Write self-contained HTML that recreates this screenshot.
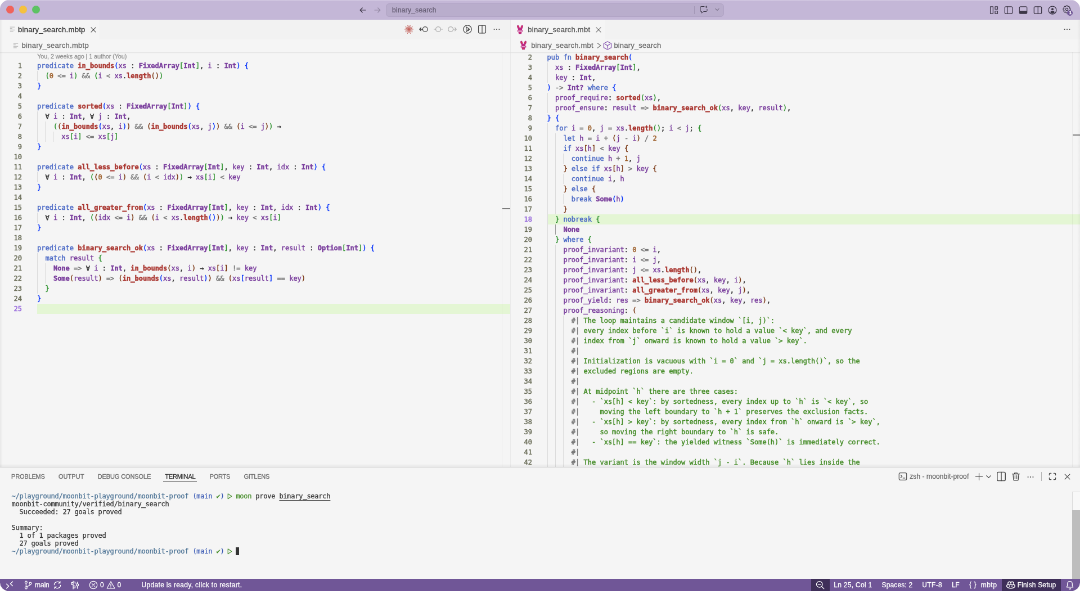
<!DOCTYPE html>
<html><head><meta charset="utf-8"><title>binary_search</title>
<style>
html,body{margin:0;padding:0;background:#fff;overflow:hidden}
body{width:1080px;height:591px;position:relative}
#w{will-change:transform;position:absolute;left:0;top:0;width:1920px;height:1050.67px;transform:scale(0.5625);transform-origin:0 0;
 font-family:"Liberation Sans",sans-serif;font-size:13px;color:#333;background:#f5f5f5;border-radius:16px;overflow:hidden}
#w *{box-sizing:border-box}
.ed{-webkit-text-stroke:0.45px currentColor}.term{-webkit-text-stroke:0.25px currentColor}.t{-webkit-text-stroke:0.3px currentColor}
.t{position:absolute;white-space:pre;font-family:"Liberation Sans",sans-serif}
.abs{position:absolute}
.ed{position:absolute;overflow:hidden;background:#f5f5f5;font-family:"DejaVu Sans Mono","Liberation Mono",monospace;font-size:12px;line-height:18px}
.ed i{font-style:normal}
.ln{position:absolute;left:0;height:18px;text-align:right;color:#6d705b}
.lna{color:#9769dc}
.cd{position:absolute;height:18px;white-space:pre;color:#333}
.cl{position:absolute;height:18px;background:#e4f6d4}
.g{position:absolute;width:1px;height:18px;background:#dcdcdc}
.ga{background:#a0a0a0}
.k{color:#4b69c6}.f{color:#aa3731;font-weight:700}.ty{color:#7a3e9d;font-weight:700}.v{color:#7a3e9d}
.p{color:#777}.n{color:#9c5d27}.s{color:#448c27}.d{color:#333}
.term{position:absolute;font-family:"DejaVu Sans Mono","Liberation Mono",monospace;font-size:12px;line-height:14px;letter-spacing:-0.225px;white-space:pre;color:#333}
.term i{font-style:normal}
.ed u,.term u{text-decoration:none;-webkit-text-stroke:0.9px currentColor}
</style></head><body><div id="w">

<div class="abs" style="left:0;top:0;width:1920px;height:35px;background:#c4b7d7"></div>
<div class="abs" style="left:0;top:0;width:1920px;height:2px;background:linear-gradient(#d9d0e6,#c4b7d7)"></div>
<div class="abs" style="left:10.87px;top:10.24px;width:14px;height:14px;border-radius:50%;background:#f0635b"></div>
<div class="abs" style="left:33.98px;top:10.24px;width:14px;height:14px;border-radius:50%;background:#f5c13f"></div>
<div class="abs" style="left:57.00px;top:10.24px;width:14px;height:14px;border-radius:50%;background:#5dc263"></div>
<svg class="abs" style="left:636.80px;top:9.60px;color:#3c3647;opacity:1" width="16" height="16" viewBox="0 0 16 16"><path d="M13 8H3.2M7.2 4L3.2 8l4 4" fill="none" stroke="currentColor" stroke-width="1.2" stroke-linecap="round" stroke-linejoin="round" /></svg>
<svg class="abs" style="left:663.29px;top:9.60px;color:#3c3647;opacity:0.35" width="16" height="16" viewBox="0 0 16 16"><path d="M3 8h9.8M8.8 4l4 4-4 4" fill="none" stroke="currentColor" stroke-width="1.2" stroke-linecap="round" stroke-linejoin="round" /></svg>
<div class="abs" style="left:686.4px;top:6px;width:600.2px;height:24px;border-radius:6px;background:#b9adcc;border:1px solid #b1a4c5"></div>
<span class="t" style="left:697.07px;top:7.60px;font-size:12px;line-height:20px;color:#6a6178;letter-spacing:0.246px;">binary_search</span>
<div class="abs" style="left:1234px;top:11px;width:1px;height:14px;background:#a397b6"></div>
<svg class="abs" style="left:1242.67px;top:9.42px;color:#3c3647;opacity:1" width="16" height="16" viewBox="0 0 16 16"><path d="M9 2.5H3.5a1.5 1.5 0 0 0-1.500 1.500v6a1.5 1.5 0 0 0 1.500 1.500H4.500v2.800l3.400-2.800H12.500a1.5 1.5 0 0 0 1.500-1.500V7.500" fill="none" stroke="currentColor" stroke-width="1" stroke-linecap="round" stroke-linejoin="round" /><path d="M12.500 0.800l0.700 1.800 1.800 0.700-1.800 0.700-0.700 1.800-0.700-1.800-1.800-0.700 1.800-0.700z" fill="currentColor"/></svg>
<svg class="abs" style="left:1268.67px;top:11.42px;color:#4a4356;opacity:1" width="12" height="12" viewBox="0 0 16 16"><path d="M4 6l4 4 4-4" fill="none" stroke="currentColor" stroke-width="1.25" stroke-linecap="round" stroke-linejoin="round" /></svg>
<svg class="abs" style="left:1759.11px;top:9.78px;color:#3c3647;opacity:1" width="16" height="16" viewBox="0 0 16 16"><path d="M1.600 1.800h4.800v12.400h-4.800zM10 1.800h4.400v4.600H10zM10 9.600h4.400v4.600H10z" fill="none" stroke="currentColor" stroke-width="1.25" stroke-linecap="round" stroke-linejoin="round" /></svg>
<svg class="abs" style="left:1784.89px;top:9.78px;color:#3c3647;opacity:1" width="16" height="16" viewBox="0 0 16 16"><rect x="1.300" y="1.800" width="13.400" height="12.400" rx="2" fill="none" stroke="currentColor" stroke-width="1.25"/><path d="M5.800 1.800v12.400" fill="none" stroke="currentColor" stroke-width="1.25" stroke-linecap="round" stroke-linejoin="round" /></svg>
<svg class="abs" style="left:1810.67px;top:9.78px;color:#3c3647;opacity:1" width="16" height="16" viewBox="0 0 16 16"><rect x="1.300" y="1.800" width="13.400" height="12.400" rx="2" fill="none" stroke="currentColor" stroke-width="1.25"/><path d="M1.300 9.200h13.400v3a2 2 0 0 1-2 2H3.300a2 2 0 0 1-2-2z" fill="currentColor"/></svg>
<svg class="abs" style="left:1837.33px;top:9.78px;color:#3c3647;opacity:1" width="16" height="16" viewBox="0 0 16 16"><rect x="1.300" y="1.800" width="13.400" height="12.400" rx="2" fill="none" stroke="currentColor" stroke-width="1.25"/><path d="M8.300 1.800v12.400" fill="none" stroke="currentColor" stroke-width="1.25" stroke-linecap="round" stroke-linejoin="round" /></svg>
<svg class="abs" style="left:1862.93px;top:9.78px;color:#3c3647;opacity:1" width="16" height="16" viewBox="0 0 16 16"><circle cx="8" cy="8" r="7" fill="none" stroke="currentColor" stroke-width="1.25"/><circle cx="8" cy="6.300" r="2" fill="currentColor"/><path d="M4 11.800c0.800-2 2.300-2.600 4-2.600s3.200 0.600 4 2.600c-1 1.300-2.400 2.200-4 2.200s-3-0.900-4-2.200z" fill="currentColor"/></svg>
<svg class="abs" style="left:1888.86px;top:9.21px;color:#3c3647;opacity:1" width="15" height="15" viewBox="0 0 16 16"><path d="M6.61 1.14L9.39 1.14L10.01 3.10L10.04 3.11L11.87 2.17L13.83 4.13L12.89 5.96L12.90 5.99L14.86 6.61L14.86 9.39L12.90 10.01L12.89 10.04L13.83 11.87L11.87 13.83L10.04 12.89L10.01 12.90L9.39 14.86L6.61 14.86L5.99 12.90L5.96 12.89L4.13 13.83L2.17 11.87L3.11 10.04L3.10 10.01L1.14 9.39L1.14 6.61L3.10 5.99L3.11 5.96L2.17 4.13L4.13 2.17L5.96 3.11L5.99 3.10z" fill="none" stroke="currentColor" stroke-width="1.2" stroke-linejoin="round"/><circle cx="8" cy="8" r="2.300" fill="none" stroke="currentColor" stroke-width="1.2"/></svg>
<div class="abs" style="left:1896.97px;top:17.51px;width:10.5px;height:10.5px;border-radius:50%;background:#705697"></div>
<span class="t" style="left:1900.80px;top:12.93px;font-size:7.5px;line-height:20px;color:#fff;letter-spacing:0.000px;font-weight:700;">1</span>
<div class="abs" style="left:0;top:35px;width:1920px;height:35px;background:#f2f2f2"></div>
<div class="abs" style="left:0;top:35px;width:177px;height:35px;background:#f5f5f5"></div>
<div class="abs" style="left:908px;top:35px;width:168px;height:35px;background:#f5f5f5"></div>
<div class="abs" style="left:0;top:70px;width:1920px;height:22px;background:#f5f5f5"></div>
<svg class="abs" style="left:13.87px;top:44.27px;color:#bdbdbd;opacity:1" width="16" height="16" viewBox="0 0 16 16"><path d="M3.850 4.100h8.300M3.850 6.700h3.900M3.850 9.300h8.300M3.850 11.900h5.800" fill="none" stroke="currentColor" stroke-width="1.3"/></svg>
<span class="t" style="left:32.00px;top:42.98px;font-size:13px;line-height:20px;color:#333;letter-spacing:0.304px;">binary_search.mbtp</span>
<svg class="abs" style="left:159.22px;top:45.98px;color:#424242;opacity:1" width="14" height="14" viewBox="0 0 16 16"><path d="M3.400 3.400l9.200 9.200M12.600 3.400l-9.200 9.200" fill="none" stroke="currentColor" stroke-width="1.25" stroke-linecap="round" stroke-linejoin="round" /></svg>
<svg class="abs" style="left:718.93px;top:44.27px;color:#c4635c;opacity:1" width="16" height="16" viewBox="0 0 16 16"><path d="M9.00 8.00L16.00 8.00 M8.95 8.31L13.90 9.92 M8.81 8.59L14.47 12.70 M8.59 8.81L11.64 13.02 M8.31 8.95L10.47 15.61 M8.00 9.00L8.00 14.20 M7.69 8.95L5.53 15.61 M7.41 8.81L4.36 13.02 M7.19 8.59L1.53 12.70 M7.05 8.31L2.10 9.92 M7.00 8.00L0.00 8.00 M7.05 7.69L2.10 6.08 M7.19 7.41L1.53 3.30 M7.41 7.19L4.36 2.98 M7.69 7.05L5.53 0.39 M8.00 7.00L8.00 1.80 M8.31 7.05L10.47 0.39 M8.59 7.19L11.64 2.98 M8.81 7.41L14.47 3.30 M8.95 7.69L13.90 6.08" fill="none" stroke="currentColor" stroke-width="0.9" stroke-linecap="round" stroke-linejoin="round" /><circle cx="8" cy="8" r="1.600" fill="currentColor"/></svg>
<svg class="abs" style="left:744.71px;top:44.27px;color:#424242;opacity:1" width="16" height="16" viewBox="0 0 16 16"><circle cx="10.800" cy="8" r="4.400" fill="none" stroke="currentColor" stroke-width="1.3"/><path d="M6.200 8H0.800M3.400 5.200L0.800 8l2.600 2.800" fill="none" stroke="currentColor" stroke-width="1.3" stroke-linecap="round" stroke-linejoin="round" /></svg>
<svg class="abs" style="left:771.20px;top:44.27px;color:#424242;opacity:0.4" width="16" height="16" viewBox="0 0 16 16"><circle cx="8" cy="8" r="4.400" fill="none" stroke="currentColor" stroke-width="1.2"/><path d="M0.500 8h3M12.500 8h3" fill="none" stroke="currentColor" stroke-width="1.2" stroke-linecap="round" stroke-linejoin="round" /></svg>
<svg class="abs" style="left:796.44px;top:44.27px;color:#424242;opacity:0.4" width="16" height="16" viewBox="0 0 16 16"><circle cx="5.200" cy="8" r="4.400" fill="none" stroke="currentColor" stroke-width="1.2"/><path d="M9.800 8h5.400M12.600 5.200L15.200 8l-2.600 2.800" fill="none" stroke="currentColor" stroke-width="1.2" stroke-linecap="round" stroke-linejoin="round" /></svg>
<svg class="abs" style="left:822.76px;top:44.27px;color:#424242;opacity:1" width="16" height="16" viewBox="0 0 16 16"><circle cx="8" cy="8" r="7.200" fill="none" stroke="currentColor" stroke-width="1.25"/><path d="M5.800 3.800v8.400M5.800 3.800l6 4.200-6 4.200" fill="none" stroke="currentColor" stroke-width="1.25" stroke-linecap="round" stroke-linejoin="round" /><circle cx="9.300" cy="9.600" r="1.500" fill="currentColor"/></svg>
<svg class="abs" style="left:848.89px;top:44.44px;color:#424242;opacity:1" width="16" height="16" viewBox="0 0 16 16"><rect x="1.600" y="1.200" width="12.800" height="13.600" rx="2" fill="none" stroke="currentColor" stroke-width="1.25"/><path d="M8 1.200v13.600" fill="none" stroke="currentColor" stroke-width="1.25" stroke-linecap="round" stroke-linejoin="round" /></svg>
<svg class="abs" style="left:875.02px;top:44.27px;color:#424242;opacity:1" width="16" height="16" viewBox="0 0 16 16"><circle cx="3.600" cy="8" r="1.050" fill="currentColor"/><circle cx="8" cy="8" r="1.050" fill="currentColor"/><circle cx="12.400" cy="8" r="1.050" fill="currentColor"/></svg>
<svg class="abs" style="left:19.56px;top:72.71px;color:#bdbdbd;opacity:1" width="16" height="16" viewBox="0 0 16 16"><path d="M3.850 4.100h8.300M3.850 6.700h3.900M3.850 9.300h8.300M3.850 11.900h5.800" fill="none" stroke="currentColor" stroke-width="1.3"/></svg>
<span class="t" style="left:38.58px;top:71.42px;font-size:13px;line-height:20px;color:#6c6c6c;letter-spacing:0.294px;">binary_search.mbtp</span>
<svg class="abs" style="left:917.59px;top:43.77px" width="13" height="17" viewBox="1.500 0 13 16"><g fill="#bf2a85"><ellipse cx="4.900" cy="3.700" rx="2.000" ry="3.700" transform="rotate(-20 4.900 3.700)"/><ellipse cx="11.100" cy="3.700" rx="2.000" ry="3.700" transform="rotate(20 11.100 3.700)"/><ellipse cx="8" cy="8" rx="3.600" ry="2.700"/><path d="M3.200 9.300h9.600v2.600H3.200z"/><path d="M4.800 11.500h6.400l-0.900 4.300H5.700z"/></g><rect x="4.200" y="9.900" width="7.600" height="1.700" rx="0.800" fill="#fdf3f8"/><circle cx="4.900" cy="3.000" r="0.950" fill="#dc4a35"/><circle cx="11.100" cy="3.000" r="0.950" fill="#dc4a35"/><circle cx="8" cy="13.600" r="0.950" fill="#dc4a35"/></svg>
<span class="t" style="left:938.31px;top:42.98px;font-size:13px;line-height:20px;color:#555;letter-spacing:0.235px;">binary_search.mbt</span>
<svg class="abs" style="left:1057.18px;top:45.98px;color:#6a6a6a;opacity:1" width="14" height="14" viewBox="0 0 16 16"><path d="M3.400 3.400l9.200 9.200M12.600 3.400l-9.200 9.200" fill="none" stroke="currentColor" stroke-width="1.25" stroke-linecap="round" stroke-linejoin="round" /></svg>
<svg class="abs" style="left:1888.89px;top:44.27px;color:#424242;opacity:1" width="16" height="16" viewBox="0 0 16 16"><circle cx="3.600" cy="8" r="1.050" fill="currentColor"/><circle cx="8" cy="8" r="1.050" fill="currentColor"/><circle cx="12.400" cy="8" r="1.050" fill="currentColor"/></svg>
<svg class="abs" style="left:923.63px;top:72.39px" width="13" height="17" viewBox="1.500 0 13 16"><g fill="#bf2a85"><ellipse cx="4.900" cy="3.700" rx="2.000" ry="3.700" transform="rotate(-20 4.900 3.700)"/><ellipse cx="11.100" cy="3.700" rx="2.000" ry="3.700" transform="rotate(20 11.100 3.700)"/><ellipse cx="8" cy="8" rx="3.600" ry="2.700"/><path d="M3.200 9.300h9.600v2.600H3.200z"/><path d="M4.800 11.500h6.400l-0.900 4.300H5.700z"/></g><rect x="4.200" y="9.900" width="7.600" height="1.700" rx="0.800" fill="#fdf3f8"/><circle cx="4.900" cy="3.000" r="0.950" fill="#dc4a35"/><circle cx="11.100" cy="3.000" r="0.950" fill="#dc4a35"/><circle cx="8" cy="13.600" r="0.950" fill="#dc4a35"/></svg>
<span class="t" style="left:944.18px;top:71.42px;font-size:13px;line-height:20px;color:#6c6c6c;letter-spacing:0.214px;">binary_search.mbt</span>
<svg class="abs" style="left:1057.07px;top:72.89px;color:#777;opacity:1" width="16" height="16" viewBox="0 0 16 16"><path d="M5.200 3.800L10.800 8l-5.600 4.200" fill="none" stroke="currentColor" stroke-width="1.3" stroke-linecap="round" stroke-linejoin="round" /></svg>
<svg class="abs" style="left:1072.00px;top:72.71px;color:#8a5bb5;opacity:1" width="16" height="16" viewBox="0 0 16 16"><path d="M8 0.800l6.600 3.600v7.200L8 15.200 1.400 11.600V4.400zM3.600 5.400L8 8l4.400-2.600M8 8v5" fill="none" stroke="currentColor" stroke-width="1.3" stroke-linecap="round" stroke-linejoin="round" /></svg>
<span class="t" style="left:1091.38px;top:71.42px;font-size:13px;line-height:20px;color:#6c6c6c;letter-spacing:0.173px;">binary_search</span>
<div class="ed" style="left:0px;top:92px;width:907px;height:738px">
<div class="ln" style="top:16px;width:39px">1</div>
<div class="cd" style="top:16px;left:66px"><i class="k">predicate</i> <i class="f">in<u>_</u>bounds</i><i style="color:#0431FA">(</i><i class="v">xs</i> : <i class="ty">FixedArray</i><i style="color:#319331">[</i><i class="ty">Int</i><i style="color:#319331">]</i>, <i class="v">i</i> : <i class="ty">Int</i><i style="color:#0431FA">)</i> <i style="color:#0431FA">{</i></div>
<div class="g" style="top:34px;left:66.00px"></div>
<div class="ln" style="top:34px;width:39px">2</div>
<div class="cd" style="top:34px;left:66px">  <i style="color:#319331">(</i><i class="n">0</i> <i class="p">&lt;=</i> <i class="v">i</i><i style="color:#319331">)</i> <i class="p">&amp;&amp;</i> <i style="color:#319331">(</i><i class="v">i</i> <i class="p">&lt;</i> <i class="v">xs</i>.<i class="f">length</i><i style="color:#7B3814">(</i><i style="color:#7B3814">)</i><i style="color:#319331">)</i></div>
<div class="ln" style="top:52px;width:39px">3</div>
<div class="cd" style="top:52px;left:66px"><i style="color:#0431FA">}</i></div>
<div class="ln" style="top:70px;width:39px">4</div>
<div class="ln" style="top:88px;width:39px">5</div>
<div class="cd" style="top:88px;left:66px"><i class="k">predicate</i> <i class="f">sorted</i><i style="color:#0431FA">(</i><i class="v">xs</i> : <i class="ty">FixedArray</i><i style="color:#319331">[</i><i class="ty">Int</i><i style="color:#319331">]</i><i style="color:#0431FA">)</i> <i style="color:#0431FA">{</i></div>
<div class="g" style="top:106px;left:66.00px"></div>
<div class="ln" style="top:106px;width:39px">6</div>
<div class="cd" style="top:106px;left:66px">  <i class="d">∀</i> <i class="v">i</i> : <i class="ty">Int</i>, <i class="d">∀</i> <i class="v">j</i> : <i class="ty">Int</i>,</div>
<div class="g" style="top:124px;left:66.00px"></div>
<div class="g" style="top:124px;left:80.45px"></div>
<div class="ln" style="top:124px;width:39px">7</div>
<div class="cd" style="top:124px;left:66px">    <i style="color:#319331">(</i><i style="color:#7B3814">(</i><i class="f">in<u>_</u>bounds</i><i style="color:#0431FA">(</i><i class="v">xs</i>, <i class="v">i</i><i style="color:#0431FA">)</i><i style="color:#7B3814">)</i> <i class="p">&amp;&amp;</i> <i style="color:#7B3814">(</i><i class="f">in<u>_</u>bounds</i><i style="color:#0431FA">(</i><i class="v">xs</i>, <i class="v">j</i><i style="color:#0431FA">)</i><i style="color:#7B3814">)</i> <i class="p">&amp;&amp;</i> <i style="color:#7B3814">(</i><i class="v">i</i> <i class="p">&lt;=</i> <i class="v">j</i><i style="color:#7B3814">)</i><i style="color:#319331">)</i> <i class="d">→</i></div>
<div class="g" style="top:142px;left:66.00px"></div>
<div class="g" style="top:142px;left:80.45px"></div>
<div class="g" style="top:142px;left:94.90px"></div>
<div class="ln" style="top:142px;width:39px">8</div>
<div class="cd" style="top:142px;left:66px">      <i class="v">xs</i><i style="color:#319331">[</i><i class="v">i</i><i style="color:#319331">]</i> <i class="p">&lt;=</i> <i class="v">xs</i><i style="color:#319331">[</i><i class="v">j</i><i style="color:#319331">]</i></div>
<div class="ln" style="top:160px;width:39px">9</div>
<div class="cd" style="top:160px;left:66px"><i style="color:#0431FA">}</i></div>
<div class="ln" style="top:178px;width:39px">10</div>
<div class="ln" style="top:196px;width:39px">11</div>
<div class="cd" style="top:196px;left:66px"><i class="k">predicate</i> <i class="f">all<u>_</u>less<u>_</u>before</i><i style="color:#0431FA">(</i><i class="v">xs</i> : <i class="ty">FixedArray</i><i style="color:#319331">[</i><i class="ty">Int</i><i style="color:#319331">]</i>, <i class="v">key</i> : <i class="ty">Int</i>, <i class="v">idx</i> : <i class="ty">Int</i><i style="color:#0431FA">)</i> <i style="color:#0431FA">{</i></div>
<div class="g" style="top:214px;left:66.00px"></div>
<div class="ln" style="top:214px;width:39px">12</div>
<div class="cd" style="top:214px;left:66px">  <i class="d">∀</i> <i class="v">i</i> : <i class="ty">Int</i>, <i style="color:#319331">(</i><i style="color:#7B3814">(</i><i class="n">0</i> <i class="p">&lt;=</i> <i class="v">i</i><i style="color:#7B3814">)</i> <i class="p">&amp;&amp;</i> <i style="color:#7B3814">(</i><i class="v">i</i> <i class="p">&lt;</i> <i class="v">idx</i><i style="color:#7B3814">)</i><i style="color:#319331">)</i> <i class="d">→</i> <i class="v">xs</i><i style="color:#319331">[</i><i class="v">i</i><i style="color:#319331">]</i> <i class="p">&lt;</i> <i class="v">key</i></div>
<div class="ln" style="top:232px;width:39px">13</div>
<div class="cd" style="top:232px;left:66px"><i style="color:#0431FA">}</i></div>
<div class="ln" style="top:250px;width:39px">14</div>
<div class="ln" style="top:268px;width:39px">15</div>
<div class="cd" style="top:268px;left:66px"><i class="k">predicate</i> <i class="f">all<u>_</u>greater<u>_</u>from</i><i style="color:#0431FA">(</i><i class="v">xs</i> : <i class="ty">FixedArray</i><i style="color:#319331">[</i><i class="ty">Int</i><i style="color:#319331">]</i>, <i class="v">key</i> : <i class="ty">Int</i>, <i class="v">idx</i> : <i class="ty">Int</i><i style="color:#0431FA">)</i> <i style="color:#0431FA">{</i></div>
<div class="g" style="top:286px;left:66.00px"></div>
<div class="ln" style="top:286px;width:39px">16</div>
<div class="cd" style="top:286px;left:66px">  <i class="d">∀</i> <i class="v">i</i> : <i class="ty">Int</i>, <i style="color:#319331">(</i><i style="color:#7B3814">(</i><i class="v">idx</i> <i class="p">&lt;=</i> <i class="v">i</i><i style="color:#7B3814">)</i> <i class="p">&amp;&amp;</i> <i style="color:#7B3814">(</i><i class="v">i</i> <i class="p">&lt;</i> <i class="v">xs</i>.<i class="f">length</i><i style="color:#0431FA">(</i><i style="color:#0431FA">)</i><i style="color:#7B3814">)</i><i style="color:#319331">)</i> <i class="d">→</i> <i class="v">key</i> <i class="p">&lt;</i> <i class="v">xs</i><i style="color:#319331">[</i><i class="v">i</i><i style="color:#319331">]</i></div>
<div class="ln" style="top:304px;width:39px">17</div>
<div class="cd" style="top:304px;left:66px"><i style="color:#0431FA">}</i></div>
<div class="ln" style="top:322px;width:39px">18</div>
<div class="ln" style="top:340px;width:39px">19</div>
<div class="cd" style="top:340px;left:66px"><i class="k">predicate</i> <i class="f">binary<u>_</u>search<u>_</u>ok</i><i style="color:#0431FA">(</i><i class="v">xs</i> : <i class="ty">FixedArray</i><i style="color:#319331">[</i><i class="ty">Int</i><i style="color:#319331">]</i>, <i class="v">key</i> : <i class="ty">Int</i>, <i class="v">result</i> : <i class="ty">Option</i><i style="color:#319331">[</i><i class="ty">Int</i><i style="color:#319331">]</i><i style="color:#0431FA">)</i> <i style="color:#0431FA">{</i></div>
<div class="g" style="top:358px;left:66.00px"></div>
<div class="ln" style="top:358px;width:39px">20</div>
<div class="cd" style="top:358px;left:66px">  <i class="k">match</i> <i class="v">result</i> <i style="color:#319331">{</i></div>
<div class="g" style="top:376px;left:66.00px"></div>
<div class="g" style="top:376px;left:80.45px"></div>
<div class="ln" style="top:376px;width:39px">21</div>
<div class="cd" style="top:376px;left:66px">    <i class="ty">None</i> <i class="p">=&gt;</i> <i class="d">∀</i> <i class="v">i</i> : <i class="ty">Int</i>, <i class="f">in<u>_</u>bounds</i><i style="color:#7B3814">(</i><i class="v">xs</i>, <i class="v">i</i><i style="color:#7B3814">)</i> <i class="d">→</i> <i class="v">xs</i><i style="color:#7B3814">[</i><i class="v">i</i><i style="color:#7B3814">]</i> <i class="p">!=</i> <i class="v">key</i></div>
<div class="g" style="top:394px;left:66.00px"></div>
<div class="g" style="top:394px;left:80.45px"></div>
<div class="ln" style="top:394px;width:39px">22</div>
<div class="cd" style="top:394px;left:66px">    <i class="ty">Some</i><i style="color:#7B3814">(</i><i class="v">result</i><i style="color:#7B3814">)</i> <i class="p">=&gt;</i> <i style="color:#7B3814">(</i><i class="f">in<u>_</u>bounds</i><i style="color:#0431FA">(</i><i class="v">xs</i>, <i class="v">result</i><i style="color:#0431FA">)</i><i style="color:#7B3814">)</i> <i class="p">&amp;&amp;</i> <i style="color:#7B3814">(</i><i class="v">xs</i><i style="color:#0431FA">[</i><i class="v">result</i><i style="color:#0431FA">]</i> <i class="p">==</i> <i class="v">key</i><i style="color:#7B3814">)</i></div>
<div class="g" style="top:412px;left:66.00px"></div>
<div class="ln" style="top:412px;width:39px">23</div>
<div class="cd" style="top:412px;left:66px">  <i style="color:#319331">}</i></div>
<div class="ln" style="top:430px;width:39px">24</div>
<div class="cd" style="top:430px;left:66px"><i style="color:#0431FA">}</i></div>
<div class="cl" style="top:448px;left:66px;width:841px"></div>
<div class="ln lna" style="top:448px;width:39px">25</div>
</div>
<div class="ed" style="left:908px;top:92px;width:1012px;height:738px">
<div class="ln" style="top:1px;width:38px">2</div>
<div class="cd" style="top:1px;left:64.5px"><i class="k">pub</i> <i class="k">fn</i> <i class="f">binary<u>_</u>search</i><i style="color:#0431FA">(</i></div>
<div class="g" style="top:19px;left:64.50px"></div>
<div class="ln" style="top:19px;width:38px">3</div>
<div class="cd" style="top:19px;left:64.5px">  <i class="v">xs</i> : <i class="ty">FixedArray</i><i style="color:#319331">[</i><i class="ty">Int</i><i style="color:#319331">]</i>,</div>
<div class="g" style="top:37px;left:64.50px"></div>
<div class="ln" style="top:37px;width:38px">4</div>
<div class="cd" style="top:37px;left:64.5px">  <i class="v">key</i> : <i class="ty">Int</i>,</div>
<div class="ln" style="top:55px;width:38px">5</div>
<div class="cd" style="top:55px;left:64.5px"><i style="color:#0431FA">)</i> <i class="p">-&gt;</i> <i class="ty">Int?</i> <i class="k">where</i> <i style="color:#0431FA">{</i></div>
<div class="g" style="top:73px;left:64.50px"></div>
<div class="ln" style="top:73px;width:38px">6</div>
<div class="cd" style="top:73px;left:64.5px">  <i class="v">proof<u>_</u>require</i>: <i class="f">sorted</i><i style="color:#319331">(</i><i class="v">xs</i><i style="color:#319331">)</i>,</div>
<div class="g" style="top:91px;left:64.50px"></div>
<div class="ln" style="top:91px;width:38px">7</div>
<div class="cd" style="top:91px;left:64.5px">  <i class="v">proof<u>_</u>ensure</i>: <i class="v">result</i> <i class="p">=&gt;</i> <i class="f">binary<u>_</u>search<u>_</u>ok</i><i style="color:#319331">(</i><i class="v">xs</i>, <i class="v">key</i>, <i class="v">result</i><i style="color:#319331">)</i>,</div>
<div class="ln" style="top:109px;width:38px">8</div>
<div class="cd" style="top:109px;left:64.5px"><i style="color:#0431FA">}</i> <i style="color:#0431FA">{</i></div>
<div class="g" style="top:127px;left:64.50px"></div>
<div class="ln" style="top:127px;width:38px">9</div>
<div class="cd" style="top:127px;left:64.5px">  <i class="k">for</i> <i class="v">i</i> <i class="p">=</i> <i class="n">0</i>, <i class="v">j</i> <i class="p">=</i> <i class="v">xs</i>.<i class="f">length</i><i style="color:#319331">(</i><i style="color:#319331">)</i>; <i class="v">i</i> <i class="p">&lt;</i> <i class="v">j</i>; <i style="color:#319331">{</i></div>
<div class="g" style="top:145px;left:64.50px"></div>
<div class="g" style="top:145px;left:78.95px"></div>
<div class="ln" style="top:145px;width:38px">10</div>
<div class="cd" style="top:145px;left:64.5px">    <i class="k">let</i> <i class="v">h</i> <i class="p">=</i> <i class="v">i</i> <i class="p">+</i> <i style="color:#7B3814">(</i><i class="v">j</i> <i class="p">-</i> <i class="v">i</i><i style="color:#7B3814">)</i> <i class="p">/</i> <i class="n">2</i></div>
<div class="g" style="top:163px;left:64.50px"></div>
<div class="g" style="top:163px;left:78.95px"></div>
<div class="ln" style="top:163px;width:38px">11</div>
<div class="cd" style="top:163px;left:64.5px">    <i class="k">if</i> <i class="v">xs</i><i style="color:#7B3814">[</i><i class="v">h</i><i style="color:#7B3814">]</i> <i class="p">&lt;</i> <i class="v">key</i> <i style="color:#7B3814">{</i></div>
<div class="g" style="top:181px;left:64.50px"></div>
<div class="g" style="top:181px;left:78.95px"></div>
<div class="g" style="top:181px;left:93.40px"></div>
<div class="ln" style="top:181px;width:38px">12</div>
<div class="cd" style="top:181px;left:64.5px">      <i class="k">continue</i> <i class="v">h</i> <i class="p">+</i> <i class="n">1</i>, <i class="v">j</i></div>
<div class="g" style="top:199px;left:64.50px"></div>
<div class="g" style="top:199px;left:78.95px"></div>
<div class="ln" style="top:199px;width:38px">13</div>
<div class="cd" style="top:199px;left:64.5px">    <i style="color:#7B3814">}</i> <i class="k">else</i> <i class="k">if</i> <i class="v">xs</i><i style="color:#7B3814">[</i><i class="v">h</i><i style="color:#7B3814">]</i> <i class="p">&gt;</i> <i class="v">key</i> <i style="color:#7B3814">{</i></div>
<div class="g" style="top:217px;left:64.50px"></div>
<div class="g" style="top:217px;left:78.95px"></div>
<div class="g" style="top:217px;left:93.40px"></div>
<div class="ln" style="top:217px;width:38px">14</div>
<div class="cd" style="top:217px;left:64.5px">      <i class="k">continue</i> <i class="v">i</i>, <i class="v">h</i></div>
<div class="g" style="top:235px;left:64.50px"></div>
<div class="g" style="top:235px;left:78.95px"></div>
<div class="ln" style="top:235px;width:38px">15</div>
<div class="cd" style="top:235px;left:64.5px">    <i style="color:#7B3814">}</i> <i class="k">else</i> <i style="color:#7B3814">{</i></div>
<div class="g" style="top:253px;left:64.50px"></div>
<div class="g" style="top:253px;left:78.95px"></div>
<div class="g" style="top:253px;left:93.40px"></div>
<div class="ln" style="top:253px;width:38px">16</div>
<div class="cd" style="top:253px;left:64.5px">      <i class="k">break</i> <i class="ty">Some</i><i style="color:#0431FA">(</i><i class="v">h</i><i style="color:#0431FA">)</i></div>
<div class="g" style="top:271px;left:64.50px"></div>
<div class="g" style="top:271px;left:78.95px"></div>
<div class="ln" style="top:271px;width:38px">17</div>
<div class="cd" style="top:271px;left:64.5px">    <i style="color:#7B3814">}</i></div>
<div class="cl" style="top:289px;left:64.5px;width:947.5px"></div>
<div class="g" style="top:289px;left:64.50px"></div>
<div class="ln lna" style="top:289px;width:38px">18</div>
<div class="cd" style="top:289px;left:64.5px">  <i style="color:#319331">}</i> <i class="k">nobreak</i> <i style="color:#319331">{</i></div>
<div class="g" style="top:307px;left:64.50px"></div>
<div class="g ga" style="top:307px;left:78.95px"></div>
<div class="ln" style="top:307px;width:38px">19</div>
<div class="cd" style="top:307px;left:64.5px">    <i class="ty">None</i></div>
<div class="g" style="top:325px;left:64.50px"></div>
<div class="ln" style="top:325px;width:38px">20</div>
<div class="cd" style="top:325px;left:64.5px">  <i style="color:#319331">}</i> <i class="k">where</i> <i style="color:#319331">{</i></div>
<div class="g" style="top:343px;left:64.50px"></div>
<div class="g" style="top:343px;left:78.95px"></div>
<div class="ln" style="top:343px;width:38px">21</div>
<div class="cd" style="top:343px;left:64.5px">    <i class="v">proof<u>_</u>invariant</i>: <i class="n">0</i> <i class="p">&lt;=</i> <i class="v">i</i>,</div>
<div class="g" style="top:361px;left:64.50px"></div>
<div class="g" style="top:361px;left:78.95px"></div>
<div class="ln" style="top:361px;width:38px">22</div>
<div class="cd" style="top:361px;left:64.5px">    <i class="v">proof<u>_</u>invariant</i>: <i class="v">i</i> <i class="p">&lt;=</i> <i class="v">j</i>,</div>
<div class="g" style="top:379px;left:64.50px"></div>
<div class="g" style="top:379px;left:78.95px"></div>
<div class="ln" style="top:379px;width:38px">23</div>
<div class="cd" style="top:379px;left:64.5px">    <i class="v">proof<u>_</u>invariant</i>: <i class="v">j</i> <i class="p">&lt;=</i> <i class="v">xs</i>.<i class="f">length</i><i style="color:#7B3814">(</i><i style="color:#7B3814">)</i>,</div>
<div class="g" style="top:397px;left:64.50px"></div>
<div class="g" style="top:397px;left:78.95px"></div>
<div class="ln" style="top:397px;width:38px">24</div>
<div class="cd" style="top:397px;left:64.5px">    <i class="v">proof<u>_</u>invariant</i>: <i class="f">all<u>_</u>less<u>_</u>before</i><i style="color:#7B3814">(</i><i class="v">xs</i>, <i class="v">key</i>, <i class="v">i</i><i style="color:#7B3814">)</i>,</div>
<div class="g" style="top:415px;left:64.50px"></div>
<div class="g" style="top:415px;left:78.95px"></div>
<div class="ln" style="top:415px;width:38px">25</div>
<div class="cd" style="top:415px;left:64.5px">    <i class="v">proof<u>_</u>invariant</i>: <i class="f">all<u>_</u>greater<u>_</u>from</i><i style="color:#7B3814">(</i><i class="v">xs</i>, <i class="v">key</i>, <i class="v">j</i><i style="color:#7B3814">)</i>,</div>
<div class="g" style="top:433px;left:64.50px"></div>
<div class="g" style="top:433px;left:78.95px"></div>
<div class="ln" style="top:433px;width:38px">26</div>
<div class="cd" style="top:433px;left:64.5px">    <i class="v">proof<u>_</u>yield</i>: <i class="v">res</i> <i class="p">=&gt;</i> <i class="f">binary<u>_</u>search<u>_</u>ok</i><i style="color:#7B3814">(</i><i class="v">xs</i>, <i class="v">key</i>, <i class="v">res</i><i style="color:#7B3814">)</i>,</div>
<div class="g" style="top:451px;left:64.50px"></div>
<div class="g" style="top:451px;left:78.95px"></div>
<div class="ln" style="top:451px;width:38px">27</div>
<div class="cd" style="top:451px;left:64.5px">    <i class="v">proof<u>_</u>reasoning</i>: <i style="color:#7B3814">(</i></div>
<div class="g" style="top:469px;left:64.50px"></div>
<div class="g" style="top:469px;left:78.95px"></div>
<div class="g" style="top:469px;left:93.40px"></div>
<div class="ln" style="top:469px;width:38px">28</div>
<div class="cd" style="top:469px;left:64.5px">      <i class="p">#|</i><i class="s"> The loop maintains a candidate window `[i, j)`:</i></div>
<div class="g" style="top:487px;left:64.50px"></div>
<div class="g" style="top:487px;left:78.95px"></div>
<div class="g" style="top:487px;left:93.40px"></div>
<div class="ln" style="top:487px;width:38px">29</div>
<div class="cd" style="top:487px;left:64.5px">      <i class="p">#|</i><i class="s"> every index before `i` is known to hold a value `&lt; key`, and every</i></div>
<div class="g" style="top:505px;left:64.50px"></div>
<div class="g" style="top:505px;left:78.95px"></div>
<div class="g" style="top:505px;left:93.40px"></div>
<div class="ln" style="top:505px;width:38px">30</div>
<div class="cd" style="top:505px;left:64.5px">      <i class="p">#|</i><i class="s"> index from `j` onward is known to hold a value `&gt; key`.</i></div>
<div class="g" style="top:523px;left:64.50px"></div>
<div class="g" style="top:523px;left:78.95px"></div>
<div class="g" style="top:523px;left:93.40px"></div>
<div class="ln" style="top:523px;width:38px">31</div>
<div class="cd" style="top:523px;left:64.5px">      <i class="p">#|</i></div>
<div class="g" style="top:541px;left:64.50px"></div>
<div class="g" style="top:541px;left:78.95px"></div>
<div class="g" style="top:541px;left:93.40px"></div>
<div class="ln" style="top:541px;width:38px">32</div>
<div class="cd" style="top:541px;left:64.5px">      <i class="p">#|</i><i class="s"> Initialization is vacuous with `i = 0` and `j = xs.length()`, so the</i></div>
<div class="g" style="top:559px;left:64.50px"></div>
<div class="g" style="top:559px;left:78.95px"></div>
<div class="g" style="top:559px;left:93.40px"></div>
<div class="ln" style="top:559px;width:38px">33</div>
<div class="cd" style="top:559px;left:64.5px">      <i class="p">#|</i><i class="s"> excluded regions are empty.</i></div>
<div class="g" style="top:577px;left:64.50px"></div>
<div class="g" style="top:577px;left:78.95px"></div>
<div class="g" style="top:577px;left:93.40px"></div>
<div class="ln" style="top:577px;width:38px">34</div>
<div class="cd" style="top:577px;left:64.5px">      <i class="p">#|</i></div>
<div class="g" style="top:595px;left:64.50px"></div>
<div class="g" style="top:595px;left:78.95px"></div>
<div class="g" style="top:595px;left:93.40px"></div>
<div class="ln" style="top:595px;width:38px">35</div>
<div class="cd" style="top:595px;left:64.5px">      <i class="p">#|</i><i class="s"> At midpoint `h` there are three cases:</i></div>
<div class="g" style="top:613px;left:64.50px"></div>
<div class="g" style="top:613px;left:78.95px"></div>
<div class="g" style="top:613px;left:93.40px"></div>
<div class="ln" style="top:613px;width:38px">36</div>
<div class="cd" style="top:613px;left:64.5px">      <i class="p">#|</i><i class="s">   - `xs[h] &lt; key`: by sortedness, every index up to `h` is `&lt; key`, so</i></div>
<div class="g" style="top:631px;left:64.50px"></div>
<div class="g" style="top:631px;left:78.95px"></div>
<div class="g" style="top:631px;left:93.40px"></div>
<div class="ln" style="top:631px;width:38px">37</div>
<div class="cd" style="top:631px;left:64.5px">      <i class="p">#|</i><i class="s">     moving the left boundary to `h + 1` preserves the exclusion facts.</i></div>
<div class="g" style="top:649px;left:64.50px"></div>
<div class="g" style="top:649px;left:78.95px"></div>
<div class="g" style="top:649px;left:93.40px"></div>
<div class="ln" style="top:649px;width:38px">38</div>
<div class="cd" style="top:649px;left:64.5px">      <i class="p">#|</i><i class="s">   - `xs[h] &gt; key`: by sortedness, every index from `h` onward is `&gt; key`,</i></div>
<div class="g" style="top:667px;left:64.50px"></div>
<div class="g" style="top:667px;left:78.95px"></div>
<div class="g" style="top:667px;left:93.40px"></div>
<div class="ln" style="top:667px;width:38px">39</div>
<div class="cd" style="top:667px;left:64.5px">      <i class="p">#|</i><i class="s">     so moving the right boundary to `h` is safe.</i></div>
<div class="g" style="top:685px;left:64.50px"></div>
<div class="g" style="top:685px;left:78.95px"></div>
<div class="g" style="top:685px;left:93.40px"></div>
<div class="ln" style="top:685px;width:38px">40</div>
<div class="cd" style="top:685px;left:64.5px">      <i class="p">#|</i><i class="s">   - `xs[h] == key`: the yielded witness `Some(h)` is immediately correct.</i></div>
<div class="g" style="top:703px;left:64.50px"></div>
<div class="g" style="top:703px;left:78.95px"></div>
<div class="g" style="top:703px;left:93.40px"></div>
<div class="ln" style="top:703px;width:38px">41</div>
<div class="cd" style="top:703px;left:64.5px">      <i class="p">#|</i></div>
<div class="g" style="top:721px;left:64.50px"></div>
<div class="g" style="top:721px;left:78.95px"></div>
<div class="g" style="top:721px;left:93.40px"></div>
<div class="ln" style="top:721px;width:38px">42</div>
<div class="cd" style="top:721px;left:64.5px">      <i class="p">#|</i><i class="s"> The variant is the window width `j - i`. Because `h` lies inside the</i></div>
</div>
<div class="abs" style="left:907px;top:35px;width:1px;height:795px;background:#eaeaea"></div>
<div class="abs" style="left:0;top:92px;width:1920px;height:3px;background:linear-gradient(#ddd,rgba(221,221,221,0))"></div>
<span class="t" style="left:66.13px;top:90.44px;font-size:10.8px;line-height:20px;color:#919191;letter-spacing:-0.079px;">You, 2 weeks ago | 1 author (You)</span>
<div class="abs" style="left:892px;top:92px;width:1px;height:738px;background:rgba(0,0,0,0.045)"></div>
<div class="abs" style="left:1906px;top:92px;width:1px;height:738px;background:rgba(0,0,0,0.045)"></div>
<div class="abs" style="left:893px;top:370px;width:14px;height:2px;background:#7d7d7d"></div>
<div class="abs" style="left:1907px;top:238.500px;width:14px;height:2px;background:#7d7d7d"></div>
<div class="abs" style="left:0;top:35px;width:5px;height:795px;background:linear-gradient(90deg,rgba(0,0,0,0.055),rgba(0,0,0,0))"></div>
<div class="abs" style="left:1915px;top:35px;width:5px;height:795px;background:linear-gradient(270deg,rgba(0,0,0,0.04),rgba(0,0,0,0))"></div>
<div class="abs" style="left:0;top:824px;width:1920px;height:6px;background:linear-gradient(rgba(0,0,0,0),rgba(0,0,0,0.05))"></div>
<div class="abs" style="left:0;top:830px;width:1920px;height:199px;background:#f5f5f5;border-top:1.3px solid #cdcdcd"></div>
<span class="t" style="left:20.09px;top:837.11px;font-size:11px;line-height:20px;color:#6e6e6e;letter-spacing:-0.197px;">PROBLEMS</span>
<span class="t" style="left:104.00px;top:837.11px;font-size:11px;line-height:20px;color:#6e6e6e;letter-spacing:0.048px;">OUTPUT</span>
<span class="t" style="left:173.69px;top:837.11px;font-size:11px;line-height:20px;color:#6e6e6e;letter-spacing:-0.107px;">DEBUG CONSOLE</span>
<span class="t" style="left:293.16px;top:837.11px;font-size:11px;line-height:20px;color:#333;letter-spacing:-0.152px;">TERMINAL</span>
<span class="t" style="left:372.80px;top:837.11px;font-size:11px;line-height:20px;color:#6e6e6e;letter-spacing:-0.286px;">PORTS</span>
<span class="t" style="left:433.42px;top:837.11px;font-size:11px;line-height:20px;color:#6e6e6e;letter-spacing:-0.172px;">GITLENS</span>
<div class="abs" style="left:290.31px;top:856.3px;width:59.56px;height:1.2px;background:#424242"></div>
<svg class="abs" style="left:1597.16px;top:839.29px;color:#555;opacity:1" width="16" height="16" viewBox="0 0 16 16"><rect x="1.300" y="1.600" width="13.400" height="12.800" rx="2.400" fill="none" stroke="currentColor" stroke-width="1.250"/><path d="M4.200 5.400l2.600 2.400-2.600 2.400M8.200 10.800h3.600" fill="none" stroke="currentColor" stroke-width="1.25" stroke-linecap="round" stroke-linejoin="round" /></svg>
<span class="t" style="left:1617.24px;top:837.29px;font-size:12px;line-height:20px;color:#6a6a6a;letter-spacing:0.089px;">zsh - moonbit-proof</span>
<svg class="abs" style="left:1732.94px;top:839.79px;color:#424242;opacity:1" width="15" height="15" viewBox="0 0 16 16"><path d="M8 1.500v13M1.500 8h13" fill="none" stroke="currentColor" stroke-width="1.25" stroke-linecap="round" stroke-linejoin="round" /></svg>
<svg class="abs" style="left:1749.66px;top:840.14px;color:#424242;opacity:1" width="15" height="15" viewBox="0 0 16 16"><path d="M4 6l4 4 4-4" fill="none" stroke="currentColor" stroke-width="1.25" stroke-linecap="round" stroke-linejoin="round" /></svg>
<svg class="abs" style="left:1770.91px;top:838.29px;color:#424242;opacity:1" width="18" height="18" viewBox="0 0 16 16"><rect x="1.600" y="1.200" width="12.800" height="13.600" rx="2" fill="none" stroke="currentColor" stroke-width="1.25"/><path d="M8 1.200v13.600" fill="none" stroke="currentColor" stroke-width="1.25" stroke-linecap="round" stroke-linejoin="round" /></svg>
<svg class="abs" style="left:1797.87px;top:839.29px;color:#424242;opacity:1" width="16" height="16" viewBox="0 0 16 16"><path d="M1.500 3.600h13M5.600 3.600V1.800h4.800v1.800M3 3.600l0.800 10.200a1.200 1.200 0 0 0 1.200 1h6a1.200 1.200 0 0 0 1.200-1L13 3.600M6.400 6.400v5.800M9.600 6.400v5.800" fill="none" stroke="currentColor" stroke-width="1.2" stroke-linecap="round" stroke-linejoin="round" /></svg>
<svg class="abs" style="left:1823.82px;top:839.64px;color:#424242;opacity:1" width="16" height="16" viewBox="0 0 16 16"><circle cx="3.600" cy="8" r="1.050" fill="currentColor"/><circle cx="8" cy="8" r="1.050" fill="currentColor"/><circle cx="12.400" cy="8" r="1.050" fill="currentColor"/></svg>
<div class="abs" style="left:1851.06px;top:839.47px;width:1px;height:16px;background:#b8b8b8"></div>
<svg class="abs" style="left:1864.29px;top:840.29px;color:#424242;opacity:1" width="14" height="14" viewBox="0 0 16 16"><path d="M1.600 5.400V2.800a1.200 1.200 0 0 1 1.200-1.200h2.600M10.600 1.600h2.600a1.200 1.200 0 0 1 1.200 1.200v2.600M14.400 10.600v2.600a1.200 1.200 0 0 1-1.200 1.200h-2.600M5.400 14.400H2.800a1.200 1.200 0 0 1-1.200-1.200v-2.600" fill="none" stroke="currentColor" stroke-width="1.35" stroke-linecap="round" stroke-linejoin="round" /></svg>
<svg class="abs" style="left:1889.57px;top:839.79px;color:#424242;opacity:1" width="15" height="15" viewBox="0 0 16 16"><path d="M3.400 3.400l9.200 9.200M12.600 3.400l-9.200 9.200" fill="none" stroke="currentColor" stroke-width="1.25" stroke-linecap="round" stroke-linejoin="round" /></svg>
<div class="term" style="left:20.4px;top:875px"><i style="color:#4a7194">~/playground/moonbit-playground/moonbit-proof</i> <i style="color:#3b5bb5">(main</i> <i style="color:#448c27">✔</i><i style="color:#3b5bb5">)</i> <svg width="7" height="14" viewBox="0 0 7 14" style="vertical-align:top;overflow:visible"><path d="M0.200 2.700L6.800 7.200 0.200 11.700z" fill="none" stroke="#448c27" stroke-width="1.100" stroke-linejoin="round"/></svg> <i style="color:#448c27">moon</i> prove <i style="text-decoration:underline;text-underline-offset:3px;text-decoration-skip-ink:none;text-decoration-thickness:1px">binary<u>_</u>search</i></div>
<div class="term" style="left:20.4px;top:889px">moonbit-community/verified/binary<u>_</u>search</div>
<div class="term" style="left:20.4px;top:903px">  Succeeded: 27 goals proved</div>
<div class="term" style="left:20.4px;top:931px">Summary:</div>
<div class="term" style="left:20.4px;top:945px">  1 of 1 packages proved</div>
<div class="term" style="left:20.4px;top:959px">  27 goals proved</div>
<div class="term" style="left:20.4px;top:973px"><i style="color:#4a7194">~/playground/moonbit-playground/moonbit-proof</i> <i style="color:#3b5bb5">(main</i> <i style="color:#448c27">✔</i><i style="color:#3b5bb5">)</i> <svg width="7" height="14" viewBox="0 0 7 14" style="vertical-align:top;overflow:visible"><path d="M0.200 2.700L6.800 7.200 0.200 11.700z" fill="none" stroke="#448c27" stroke-width="1.100" stroke-linejoin="round"/></svg> <i style="display:inline-block;width:6px;height:14px;background:#333;vertical-align:top"></i></div>
<div class="abs" style="left:1906.3px;top:874px;width:14px;height:33px;background:#f8f8f8;border-left:1px solid #dcdcdc;border-top:1px solid #dcdcdc"></div>
<div class="abs" style="left:1906.3px;top:906.7px;width:14px;height:122px;background:#bdbdbd"></div>
<div class="abs" style="left:0;top:1028.67px;width:1920px;height:22px;background:#705697"></div>
<svg class="abs" style="left:9.42px;top:1031.64px;color:#fff;opacity:1" width="16" height="16" viewBox="0 0 16 16"><path d="M2.600 6.200l4 3.800-4 3.800M13.400 2l-4 3.800 4 3.800" fill="none" stroke="currentColor" stroke-width="1.35" stroke-linecap="round" stroke-linejoin="round" /></svg>
<svg class="abs" style="left:41.96px;top:1031.64px;color:#fff;opacity:1" width="16" height="16" viewBox="0 0 16 16"><circle cx="4.300" cy="2.900" r="1.900" fill="none" stroke="currentColor" stroke-width="1.250"/><circle cx="4.300" cy="13.100" r="1.900" fill="none" stroke="currentColor" stroke-width="1.250"/><circle cx="11.900" cy="4.900" r="1.900" fill="none" stroke="currentColor" stroke-width="1.250"/><path d="M4.300 4.800v6.400M11.900 6.800c0 3-4.600 2.200-7.200 4.600" fill="none" stroke="currentColor" stroke-width="1.25" stroke-linecap="round" stroke-linejoin="round" /></svg>
<span class="t" style="left:62.04px;top:1029.64px;font-size:12px;line-height:20px;color:#fff;letter-spacing:-0.103px;">main</span>
<svg class="abs" style="left:94.40px;top:1031.64px;color:#fff;opacity:1" width="16" height="16" viewBox="0 0 16 16"><path d="M13.600 8.300a5.600 5.600 0 0 1-10 3.300M2.400 7.700a5.600 5.600 0 0 1 10-3.300M12.800 1.400v3.300h-3.300M3.200 14.600v-3.300h3.300" fill="none" stroke="currentColor" stroke-width="1.3" stroke-linecap="round" stroke-linejoin="round" /></svg>
<svg class="abs" style="left:125.33px;top:1031.64px;color:#fff;opacity:1" width="16" height="16" viewBox="0 0 16 16"><path d="M5 1v14M5 3.500h-3v3.500h3M5 9.500h3.500v3.500H5M5 2.500h3.500v3M12.500 2.500v3M12.500 10v4" fill="none" stroke="currentColor" stroke-width="1.25" stroke-linecap="round" stroke-linejoin="round" /><circle cx="12.500" cy="7.700" r="2" fill="none" stroke="currentColor" stroke-width="1.250"/></svg>
<svg class="abs" style="left:158.40px;top:1031.64px;color:#fff;opacity:1" width="16" height="16" viewBox="0 0 16 16"><circle cx="8" cy="8" r="6.700" fill="none" stroke="currentColor" stroke-width="1.250"/><path d="M5.400 5.400l5.200 5.200M10.600 5.400l-5.200 5.200" fill="none" stroke="currentColor" stroke-width="1.25" stroke-linecap="round" stroke-linejoin="round" /></svg>
<span class="t" style="left:177.96px;top:1029.64px;font-size:12px;line-height:20px;color:#fff;letter-spacing:0.000px;">0</span>
<svg class="abs" style="left:188.62px;top:1031.64px;color:#fff;opacity:1" width="16" height="16" viewBox="0 0 16 16"><path d="M8 1.800L14.800 13.800H1.200zM8 6.200v4M8 11.900v0.100" fill="none" stroke="currentColor" stroke-width="1.25" stroke-linecap="round" stroke-linejoin="round" /></svg>
<span class="t" style="left:208.53px;top:1029.64px;font-size:12px;line-height:20px;color:#fff;letter-spacing:0.000px;">0</span>
<span class="t" style="left:251.38px;top:1029.64px;font-size:12px;line-height:20px;color:#fff;letter-spacing:0.348px;">Update is ready, click to restart.</span>
<div class="abs" style="left:1442.13px;top:1028.67px;width:32.71px;height:22px;background:#3f2f59"></div>
<svg class="abs" style="left:1450.49px;top:1031.64px;color:#fff;opacity:1" width="16" height="16" viewBox="0 0 16 16"><circle cx="6.800" cy="6.800" r="5.300" fill="none" stroke="currentColor" stroke-width="1.250"/><path d="M10.700 10.700L14.800 14.800M4.300 6.800h5" fill="none" stroke="currentColor" stroke-width="1.25" stroke-linecap="round" stroke-linejoin="round" /></svg>
<span class="t" style="left:1482.31px;top:1029.64px;font-size:12px;line-height:20px;color:#fff;letter-spacing:0.296px;">Ln 25, Col 1</span>
<span class="t" style="left:1567.47px;top:1029.64px;font-size:12px;line-height:20px;color:#fff;letter-spacing:0.174px;">Spaces: 2</span>
<span class="t" style="left:1639.29px;top:1029.64px;font-size:12px;line-height:20px;color:#fff;letter-spacing:0.347px;">UTF-8</span>
<span class="t" style="left:1691.91px;top:1029.64px;font-size:12px;line-height:20px;color:#fff;letter-spacing:-0.336px;">LF</span>
<span class="t" style="left:1723.02px;top:1029.11px;font-size:12px;line-height:20px;color:#fff;letter-spacing:0.602px;">{ }</span>
<span class="t" style="left:1743.64px;top:1029.64px;font-size:12px;line-height:20px;color:#fff;letter-spacing:0.530px;">mbtp</span>
<div class="abs" style="left:1781.33px;top:1028.67px;width:104.53px;height:22px;background:#3f2f59"></div>
<svg class="abs" style="left:1788.80px;top:1031.64px;color:#fff;opacity:1" width="16" height="16" viewBox="0 0 16 16"><path d="M2.800 7V5.400C2.800 3.300 4.300 2.300 5.900 2.300s2.100 1 2.100 2.600c0-1.600 0.500-2.600 2.100-2.600s3.100 1 3.100 3.100V7M2 7.300c-0.900 0.500-1.300 1.300-1.300 2.600 0 1.900 3.100 3.900 7.300 3.900s7.300-2 7.300-3.900c0-1.300-0.400-2.100-1.300-2.600M2.800 7c1.600 0.900 3.700 0.900 5.200-0.500 1.500 1.400 3.600 1.400 5.200 0.500M6 9.400v1.700M10 9.400v1.700" fill="none" stroke="currentColor" stroke-width="1.5" stroke-linecap="round" stroke-linejoin="round" /></svg>
<span class="t" style="left:1808.71px;top:1029.64px;font-size:12px;line-height:20px;color:#fff;letter-spacing:0.160px;">Finish Setup</span>
<svg class="abs" style="left:1894.22px;top:1031.64px;color:#fff;opacity:1" width="16" height="16" viewBox="0 0 16 16"><path d="M8 1.500c-2.700 0-4.300 1.900-4.300 4.500v3.200L2.200 11.800h11.600L12.300 9.200V6c0-2.600-1.600-4.500-4.300-4.500zM6.400 13.800a1.600 1.600 0 0 0 3.200 0" fill="none" stroke="currentColor" stroke-width="1.25" stroke-linecap="round" stroke-linejoin="round" /></svg>
</div></body></html>
